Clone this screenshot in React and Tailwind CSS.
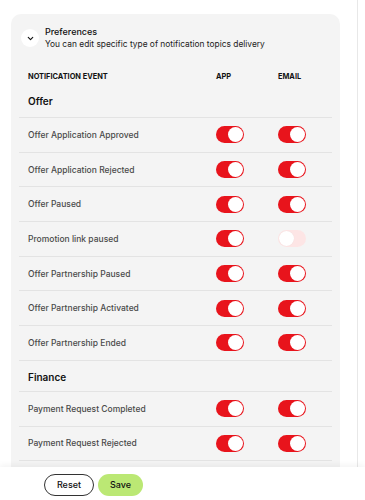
import React from "react";

const ChevronDown = () => (
  <svg width="9" height="9" viewBox="0 0 24 24" fill="none" stroke="#111" strokeWidth="3" strokeLinecap="round" strokeLinejoin="round">
    <path d="M6 9l6 6 6-6" />
  </svg>
);

function Toggle({ on }) {
  return on ? (
    <div className="flex h-[17px] w-[28px] items-center justify-end rounded-full bg-[#e8141c] px-[1px]">
      <div className="h-[15px] w-[15px] rounded-full bg-white" />
    </div>
  ) : (
    <div className="flex h-[17px] w-[28px] items-center justify-start rounded-full bg-[#fde5e5] px-[1px]">
      <div className="h-[15px] w-[15px] rounded-full bg-white shadow-[0_0_1px_rgba(0,0,0,0.08)]" />
    </div>
  );
}

function Row({ label, app = true, email = true }) {
  return (
    <div className="flex h-[34.7px] items-center border-t border-[#e3e3e3]">
      <div className="w-[197px] pl-[9px] text-[8.5px] font-medium leading-[12px] text-[#4a4a4a]">{label}</div>
      <div className="w-[62px]">
        <Toggle on={app} />
      </div>
      <div className="w-[54px]">
        <Toggle on={email} />
      </div>
    </div>
  );
}

export default function App() {
  return (
    <div className="flex h-[500px] w-[365px] flex-col overflow-hidden bg-white font-['Inter',sans-serif]">
      <div className="flex min-h-0 flex-1 overflow-hidden">
        <div className="w-[357px] pl-[11px] pr-[17px] pt-[14px]">
          <div className="rounded-[10px] bg-[#f4f4f4] pt-[12px] pb-[40px]">
            <div className="flex items-center pl-[10px]">
              <div className="flex h-[18px] w-[18px] items-center justify-center rounded-full bg-white">
                <ChevronDown />
              </div>
              <div className="ml-[6px]">
                <div className="text-[9px] font-medium leading-[12px] text-[#111]">Preferences</div>
                <div className="text-[8.4px] leading-[12px] text-[#222]">
                  You can edit specific type of notification topics delivery
                </div>
              </div>
            </div>
            <div className="mx-[8px]">
              <div className="mt-[22px] flex h-[10px] items-center text-[7.4px] font-bold uppercase leading-[10px] text-[#111]">
                <div className="w-[197px] pl-[9px]">Notification Event</div>
                <div className="w-[62px]">App</div>
                <div className="w-[54px]">Email</div>
              </div>
              <div className="pt-[12px] pb-[9px] pl-[9px] text-[10px] font-semibold leading-[14px] text-[#111]">Offer</div>
              <Row label="Offer Application Approved" />
              <Row label="Offer Application Rejected" />
              <Row label="Offer Paused" />
              <Row label="Promotion link paused" email={false} />
              <Row label="Offer Partnership Paused" />
              <Row label="Offer Partnership Activated" />
              <Row label="Offer Partnership Ended" />
              <div className="border-t border-[#e3e3e3] pt-[9px] pb-[7px] pl-[9px] text-[10px] font-semibold leading-[14px] text-[#111]">
                Finance
              </div>
              <Row label="Payment Request Completed" />
              <Row label="Payment Request Rejected" />
              <div className="border-t border-[#e3e3e3]" />
            </div>
          </div>
        </div>
        <div className="w-px bg-[#e8e8e8]" />
      </div>
      <div className="flex h-[33px] shrink-0 items-start gap-[4px] bg-white pl-[44px] pt-[7px] shadow-[0_-2px_6px_rgba(0,0,0,0.05)]">
        <button className="flex h-[22px] w-[50px] items-center justify-center rounded-full border border-[#333] bg-white text-[9px] font-medium leading-[12px] text-[#111]">
          Reset
        </button>
        <button className="flex h-[22px] w-[45px] items-center justify-center rounded-full bg-[#bbe874] text-[9px] font-medium leading-[12px] text-[#111]">
          Save
        </button>
      </div>
    </div>
  );
}
